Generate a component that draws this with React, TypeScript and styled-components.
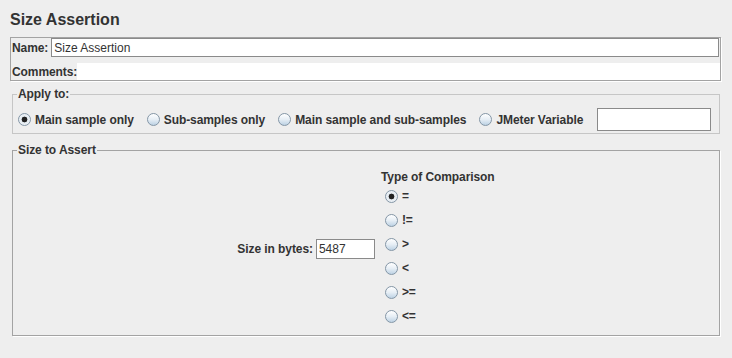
import React from 'react';
import styled, {createGlobalStyle} from "styled-components";

const GlobalStyle = createGlobalStyle`
    html, body {
        margin: 0;
        padding: 0;
        background: #eeeeee;
    }
    body {
        font-family: "Liberation Sans", Arial, sans-serif;
        font-size: 12px;
        color: #333333;
    }
`

const applyOptions = [
    {label: "Main sample only", checked: true},
    {label: "Sub-samples only", checked: false},
    {label: "Main sample and sub-samples", checked: false},
    {label: "JMeter Variable", checked: false},
]

const comparisons = ["=", "!=", ">", "<", ">=", "<="]

type RadioProps = {
    label: string
    checked?: boolean
}

const Radio = ({label, checked}: RadioProps) => (
    <RadioItem>
        <Circle $checked={!!checked}/>
        <span>{label}</span>
    </RadioItem>
)

export default function App() {
    return (
        <Page>
            <GlobalStyle/>
            <Title>Size Assertion</Title>
            <NamePanel>
                <NameRow>
                    <Label>Name:</Label>
                    <TextField value="Size Assertion" readOnly/>
                </NameRow>
                <CommentsRow>
                    <Label>Comments:</Label>
                    <CommentsArea/>
                </CommentsRow>
            </NamePanel>

            <Group $top={13} $height={40}>
                <GroupTitle>Apply to:</GroupTitle>
                <ApplyRow>
                    {applyOptions.map(o => (
                        <Radio key={o.label} label={o.label} checked={o.checked}/>
                    ))}
                    <VariableField/>
                </ApplyRow>
            </Group>

            <Group $top={16} $height={186}>
                <GroupTitle>Size to Assert</GroupTitle>
                <SizeBody>
                    <SizeField>
                        <Label>Size in bytes:</Label>
                        <BytesField value="5487" readOnly/>
                    </SizeField>
                    <Comparison>
                        <ComparisonTitle>Type of Comparison</ComparisonTitle>
                        {comparisons.map((c, i) => (
                            <ComparisonItem key={c}>
                                <Radio label={c} checked={i === 0}/>
                            </ComparisonItem>
                        ))}
                    </Comparison>
                </SizeBody>
            </Group>
        </Page>
    );
}

const Page = styled.div`
    width: 732px;
    height: 358px;
    box-sizing: border-box;
    padding: 11px 0 0 10px;
    display: flex;
    flex-direction: column;
    overflow: hidden;
`

const Title = styled.h1`
    margin: 0;
    font-size: 16px;
    line-height: 18px;
    font-weight: bold;
    color: #333333;
`

const NamePanel = styled.div`
    margin-top: 8px;
    width: 711px;
    box-sizing: border-box;
    border: 1px solid #a3a3a3;
    box-shadow: 1px 1px 0 #ffffff;
    display: flex;
    flex-direction: column;
`

const NameRow = styled.div`
    display: flex;
    align-items: center;
    height: 19px;
    padding: 0 1px;
`

const CommentsRow = styled.div`
    display: flex;
    align-items: center;
    height: 17px;
    margin-top: 6px;
    padding-left: 1px;
`

const Label = styled.span`
    font-weight: bold;
    font-size: 12px;
    color: #333333;
    white-space: nowrap;
    letter-spacing: -0.08px;
`

const TextField = styled.input`
    flex: 1;
    margin-left: 3px;
    height: 19px;
    box-sizing: border-box;
    border: 1px solid #8a8a8a;
    background: #ffffff;
    padding: 0 2px;
    font-family: "Liberation Sans", Arial, sans-serif;
    font-size: 12px;
    color: #333333;
    outline: none;
`

const CommentsArea = styled.div`
    flex: 1;
    height: 17px;
    background: #ffffff;
`

const Group = styled.section<{ $top: number; $height: number }>`
    margin: ${p => p.$top}px 0 0 2px;
    width: 708px;
    height: ${p => p.$height}px;
    box-sizing: border-box;
    border: 1px solid #c6c6c6;
    display: flex;
    flex-direction: column;
    & + & {
        border-color: #a3a3a3;
        box-shadow: 1px 1px 0 #ffffff;
    }
`

const GroupTitle = styled.div`
    align-self: flex-start;
    margin: -8px 0 0 4px;
    padding: 0 1px;
    background: #eeeeee;
    font-weight: bold;
    font-size: 12px;
    line-height: 14px;
    color: #333333;
    letter-spacing: -0.08px;
`

const ApplyRow = styled.div`
    display: flex;
    align-items: center;
    gap: 13px;
    margin-top: 7px;
    padding-left: 5px;
    height: 23px;
`

const RadioItem = styled.label`
    display: flex;
    align-items: center;
    gap: 4px;
    font-weight: bold;
    font-size: 12px;
    color: #333333;
    white-space: nowrap;
    letter-spacing: -0.08px;
`

const Circle = styled.span<{ $checked: boolean }>`
    width: 13px;
    height: 13px;
    box-sizing: border-box;
    border-radius: 50%;
    border: 1px solid #8496a6;
    background: ${p => p.$checked
            ? "radial-gradient(circle, #222 0, #222 2.6px, #e4ebf1 3.2px, #f4f7fa 100%)"
            : "linear-gradient(to bottom, #ffffff 0%, #e6eef5 50%, #bdd2e4 100%)"};
`

const VariableField = styled.div`
    margin-left: 1px;
    width: 114px;
    height: 23px;
    box-sizing: border-box;
    border: 1px solid #8a8a8a;
    background: #ffffff;
`

const SizeBody = styled.div`
    flex: 1;
    display: flex;
    justify-content: center;
    align-items: center;
    padding-top: 6px;
`

const SizeField = styled.div`
    display: flex;
    align-items: center;
    gap: 3px;
    margin-top: 0;
`

const BytesField = styled.input`
    width: 59px;
    height: 20px;
    box-sizing: border-box;
    border: 1px solid #8a8a8a;
    background: #ffffff;
    padding: 0 2px;
    font-family: "Liberation Sans", Arial, sans-serif;
    font-size: 12px;
    color: #333333;
    outline: none;
`

const Comparison = styled.div`
    margin-left: 6px;
    display: flex;
    flex-direction: column;
`

const ComparisonTitle = styled.div`
    font-weight: bold;
    font-size: 12px;
    line-height: 14px;
    color: #333333;
    letter-spacing: -0.08px;
`

const ComparisonItem = styled.div`
    height: 24px;
    display: flex;
    align-items: center;
    padding-left: 4px;
`
